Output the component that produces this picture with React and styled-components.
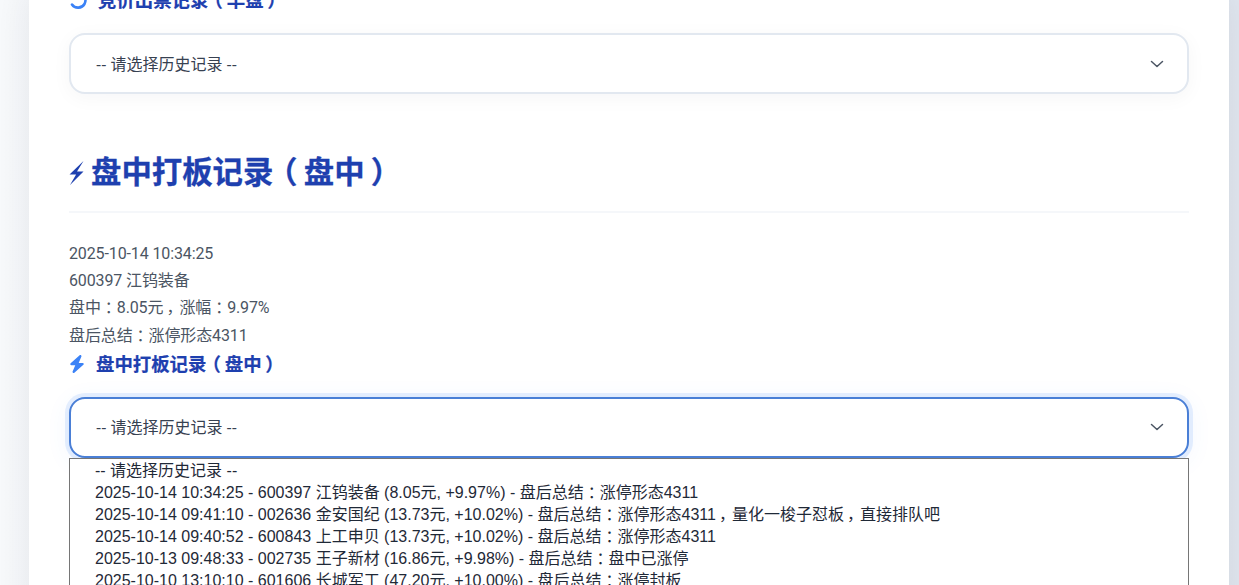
import React from 'react';
import styled, { createGlobalStyle } from 'styled-components';
import { FaBolt } from 'react-icons/fa6';

const Global = createGlobalStyle`
  html, body { margin: 0; padding: 0; height: 585px; overflow: hidden; }
  body {
    background: linear-gradient(90deg, #f8fafc 0%, #e2e8f0 100%);
    font-family: "Roboto", "Noto Sans CJK SC", sans-serif;
  }
`;
const Page = styled.div`
  height: 585px;
  overflow: hidden;
  padding: 0 10px 0 29px;
`;
const Card = styled.main`
  background: #fff;
  box-shadow: 0 0 40px rgba(15, 23, 42, 0.09);
  padding: 0 40px;
  height: 640px;
  box-sizing: border-box;
`;
const ClippedTop = styled.div`
  margin-top: -13px;
`;
const SubHeading = styled.h3`
  display: flex;
  align-items: center;
  gap: 11px;
  margin: ${p => p.$top || 0}px 0 0;
  height: 27px;
  font-size: 18.4px;
  font-weight: 700;
  line-height: 27px;
  color: #1e40af;
  -webkit-text-stroke: 0.2px #1e40af;
  & > svg { flex: none; width: ${p => p.$icon || 16}px; height: 18px; color: #3b82f6; -webkit-text-stroke: 0; }
`;
const SelectWrap = styled.div`
  position: relative;
  margin-top: 19px;
`;
const SelectBox = styled.div`
  display: flex;
  align-items: center;
  justify-content: space-between;
  box-sizing: border-box;
  height: 61px;
  padding: 0 22px 0 25px;
  background: #fff;
  border: 2px solid ${p => (p.$focused ? '#4a7fd6' : '#e2e8f0')};
  border-radius: 16px;
  color: #374151;
  box-shadow: ${p => (p.$focused
    ? '0 0 0 4px rgba(59,130,246,0.12), 0 4px 24px rgba(59,130,246,0.08)'
    : '0 4px 20px rgba(15,23,42,0.04)')};
`;
const SelectLabel = styled.span`
  font-family: "Open Sans", "Noto Sans CJK SC", sans-serif;
  font-size: 16px;
  padding-bottom: 2px;
`;
const Chevron = styled.svg`
  width: 16px;
  height: 16px;
  fill: none;
  stroke: #4b5563;
  stroke-width: 1.5;
  stroke-linecap: round;
  stroke-linejoin: round;
`;
const SectionTitle = styled.h2`
  display: flex;
  align-items: center;
  gap: 7px;
  margin: 60px 0 0;
  padding-bottom: 19px;
  border-bottom: 2px solid #f5f7fa;
  font-size: 30.4px;
  font-weight: 700;
  line-height: 38px;
  color: #1e40af;
  -webkit-text-stroke: 0.3px #1e40af;
  & > svg { width: 15px; height: 26px; flex: none; }
`;
const Info = styled.div`
  margin: 27px 0 0;
  font-size: 16px;
  letter-spacing: -0.12px;
  line-height: 27.2px;
  color: #4b5563;
`;
const Listbox = styled.ul`
  position: absolute;
  top: 61px;
  left: 0;
  right: 0;
  margin: 0;
  padding: 1px 0 0 25px;
  list-style: none;
  height: 160px;
  background: #fff;
  border: 1px solid #767676;
  font-size: 16px;
  line-height: 22px;
  color: #1f2937;
  font-family: "Liberation Sans", "Noto Sans CJK SC", sans-serif;
  z-index: 2;
`;
const Mark = styled.span`
  display: inline-block;
  width: 1em;
  text-align: center;
  font-feature-settings: "palt";
`;

const Txt = ({ children }) =>
  children.split(/([：，（）])/).map((part, i) =>
    i % 2 ? <Mark key={i}>{part}</Mark> : part
  );

const ThinBolt = () => (
  <svg viewBox="0 0 15 26"><path d="M14.5 1 .5 14.5h6.6L1 25 14.5 11.5H8z" fill="#1e40af" /></svg>
);
const Spin = () => (
  <svg viewBox="0 0 18 18" fill="none" stroke="#3b82f6" strokeWidth="2.6" strokeLinecap="round"><path d="M3 12.5c3 4.5 10 4 12.5-.5 1.5-3 1-6-.5-8" /></svg>
);
const Arrow = () => (
  <Chevron viewBox="0 0 16 16"><path d="M2.5 5.5 8 10.5l5.5-5" /></Chevron>
);

const rows = [
  '-- 请选择历史记录 --',
  '2025-10-14 10:34:25 - 600397 江钨装备 (8.05元, +9.97%) - 盘后总结：涨停形态4311',
  '2025-10-14 09:41:10 - 002636 金安国纪 (13.73元, +10.02%) - 盘后总结：涨停形态4311，量化一梭子怼板，直接排队吧',
  '2025-10-14 09:40:52 - 600843 上工申贝 (13.73元, +10.02%) - 盘后总结：涨停形态4311',
  '2025-10-13 09:48:33 - 002735 王子新材 (16.86元, +9.98%) - 盘后总结：盘中已涨停',
  '2025-10-10 13:10:10 - 601606 长城军工 (47.20元, +10.00%) - 盘后总结：涨停封板',
];

export default function App() {
  return (
    <>
      <Global />
      <Page>
        <Card>
          <ClippedTop>
            <SubHeading $icon={18}><Spin /><span><Txt>竞价出票记录（早盘）</Txt></span></SubHeading>
          </ClippedTop>
          <SelectWrap>
            <SelectBox><SelectLabel>-- 请选择历史记录 --</SelectLabel><Arrow /></SelectBox>
          </SelectWrap>
          <SectionTitle><ThinBolt /><span><Txt>盘中打板记录（盘中）</Txt></span></SectionTitle>
          <Info>
            <div>2025-10-14 10:34:25</div>
            <div>600397 江钨装备</div>
            <div><Txt>盘中：8.05元，涨幅：9.97%</Txt></div>
            <div><Txt>盘后总结：涨停形态4311</Txt></div>
          </Info>
          <SubHeading $top={2}><FaBolt /><span><Txt>盘中打板记录（盘中）</Txt></span></SubHeading>
          <SelectWrap>
            <SelectBox $focused><SelectLabel>-- 请选择历史记录 --</SelectLabel><Arrow /></SelectBox>
            <Listbox>{rows.map(r => <li key={r}><Txt>{r}</Txt></li>)}</Listbox>
          </SelectWrap>
        </Card>
      </Page>
    </>
  );
}
